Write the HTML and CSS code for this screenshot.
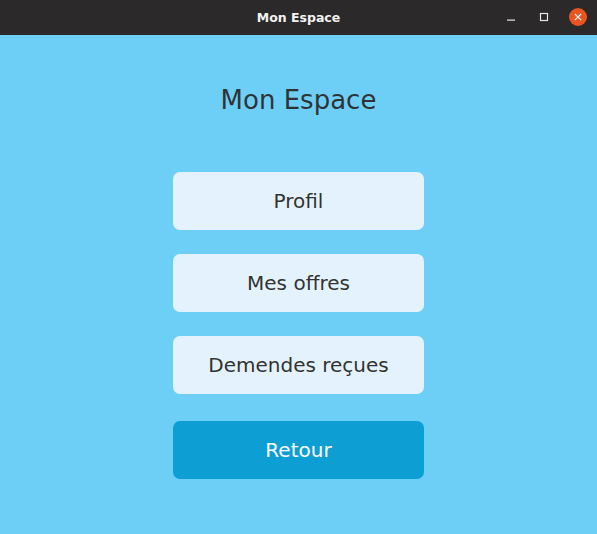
FILE: index.html
```html
<!DOCTYPE html>
<html>
<head>
<meta charset="utf-8">
<link rel="stylesheet" href="styles.css">
</head>
<body>
<div class="titlebar">
  <span class="wtitle">Mon Espace</span>
  <div class="controls">
    <svg class="ctl" width="16" height="16" viewBox="0 0 16 16"><rect x="4" y="10.5" width="8" height="1.2" fill="#e6e6e6"/></svg>
    <svg class="ctl" width="16" height="16" viewBox="0 0 16 16"><rect x="4.5" y="4.5" width="7" height="7" fill="none" stroke="#e6e6e6" stroke-width="1.2"/></svg>
    <svg class="ctl" width="18" height="18" viewBox="0 0 18 18"><circle cx="9" cy="9" r="9" fill="#e95420"/><path d="M5.8 5.8 L12.2 12.2 M12.2 5.8 L5.8 12.2" stroke="#fff" stroke-width="1.2"/></svg>
  </div>
</div>
<main class="content">
  <h1 class="heading">Mon Espace</h1>
  <div class="buttons">
    <button class="btn">Profil</button>
    <button class="btn">Mes offres</button>
    <button class="btn">Demendes reçues</button>
    <button class="btn primary">Retour</button>
  </div>
</main>
</body>
</html>
```
FILE: styles.css
```css
html, body {
  margin: 0;
  padding: 0;
  height: 100%;
}
body {
  background: #6ecff6;
  font-family: "DejaVu Sans", sans-serif;
  overflow: hidden;
}
.titlebar {
  height: 35px;
  background: #2b2929;
  position: relative;
  display: flex;
  align-items: center;
  justify-content: center;
}
.wtitle {
  color: #f2f2f2;
  font-weight: bold;
  font-size: 12.5px;
}
.controls {
  position: absolute;
  right: 10px;
  top: 8px;
  display: flex;
  align-items: center;
  gap: 17px;
}
.ctl { display: block; }
.content {
  display: flex;
  flex-direction: column;
  align-items: center;
}
.heading {
  margin: 50px 0 0 0;
  font-weight: normal;
  font-size: 26px;
  line-height: 30px;
  color: #2e3436;
}
.buttons {
  margin-top: 57px;
  display: flex;
  flex-direction: column;
  gap: 24px;
}
.btn {
  width: 251px;
  height: 58px;
  border: none;
  border-radius: 7px;
  background: #e3f2fc;
  color: #333333;
  font-family: "DejaVu Sans", sans-serif;
  font-size: 20px;
  padding: 0;
}
.btn.primary {
  margin-top: 3px;
  background: #0d9ed4;
  color: #ffffff;
}
```
